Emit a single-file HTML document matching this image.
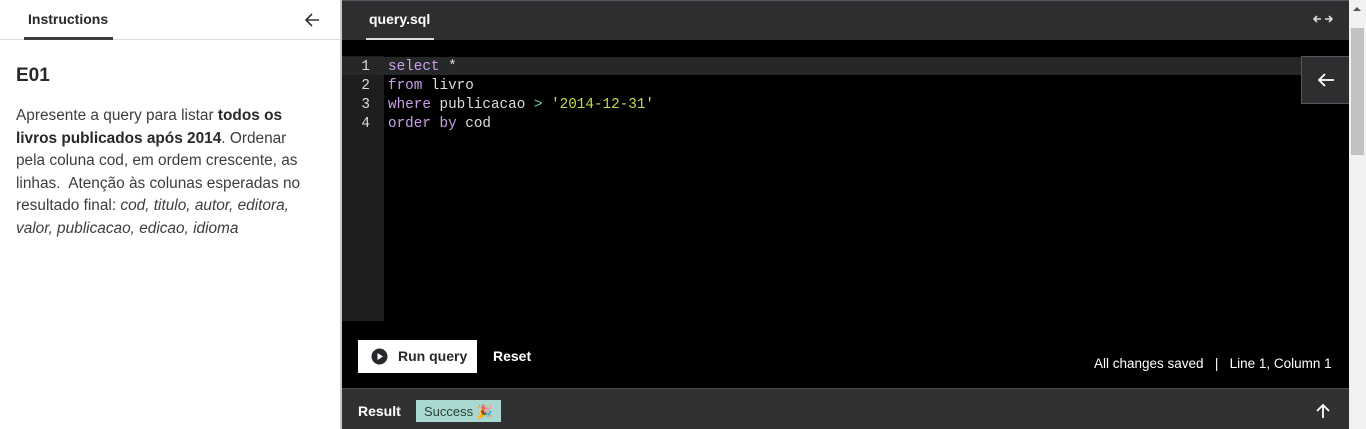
<!DOCTYPE html>
<html><head><style>
*{margin:0;padding:0;box-sizing:border-box}
body{width:1366px;height:429px;overflow:hidden;position:relative;font-family:"Liberation Sans",sans-serif;background:#fff}
.abs{position:absolute}
.mono{font-family:"Liberation Mono",monospace;font-size:14.3px}
</style></head><body>
<div class="abs" style="left:0;top:0;width:340px;height:429px;background:#fff"></div>
<div class="abs" style="left:0;top:39px;width:340px;height:1px;background:#dcdde0"></div>
<div class="abs" style="left:28px;top:11px;font-size:14px;font-weight:bold;color:#26282b">Instructions</div>
<div class="abs" style="left:24px;top:37px;width:89px;height:3px;background:#3b3d40"></div>
<svg class="abs" style="left:304px;top:12px" width="16" height="16" viewBox="0 0 16 16"><path d="M15 8H2M8 2L2 8l6 6" stroke="#333" stroke-width="1.6" fill="none"/></svg>
<div class="abs" style="left:16px;top:65px;font-size:19px;font-weight:bold;color:#26282b">E01</div>
<div class="abs" style="left:16px;top:105px;width:292px;font-size:15.4px;line-height:22.5px;color:#3b3d40">Apresente a query para listar <b style="color:#26282b">todos os livros publicados após 2014</b>. Ordenar pela coluna cod, em ordem crescente, as linhas.&nbsp; Atenção às colunas esperadas no resultado final: <i>cod, titulo, autor, editora, valor, publicacao, edicao, idioma</i></div>
<div class="abs" style="left:340px;top:0;width:2px;height:429px;background:#c8c9cc"></div>
<div class="abs" style="left:342px;top:0;width:1007px;height:40px;background:#2d2e30;border-top:1px solid #55575a"></div>
<div class="abs" style="left:369px;top:11px;font-size:14px;font-weight:bold;color:#fff">query.sql</div>
<div class="abs" style="left:366px;top:38px;width:68px;height:2px;background:#dcdcdc"></div>
<svg class="abs" style="left:1313px;top:13px" width="20" height="12" viewBox="0 0 20 12"><path d="M1 6h7M4 3L1 6l3 3M12 6h7M16 3l3 3-3 3" stroke="#ddd" stroke-width="1.6" fill="none"/></svg>
<div class="abs" style="left:342px;top:40px;width:1007px;height:348px;background:#000"></div>
<div class="abs" style="left:342px;top:56px;width:42px;height:265px;background:#1d1e20"></div>
<div class="abs" style="left:342px;top:57px;width:1007px;height:18px;background:#262729"></div>
<div class="abs mono" style="left:352px;top:58px;line-height:19px;color:#ddd;text-align:right;width:18px">1<br>2<br>3<br>4</div>
<div class="abs mono" style="left:388px;top:58px;line-height:19px;color:#ddd;white-space:pre"><span style="color:#c9a0e8">select</span> *
<span style="color:#c9a0e8">from</span> livro
<span style="color:#c9a0e8">where</span> publicacao <span style="color:#6cc8c0">&gt;</span> <span style="color:#c9d94a">'2014-12-31'</span>
<span style="color:#c9a0e8">order</span> <span style="color:#c9a0e8">by</span> cod</div>
<div class="abs" style="left:1301px;top:56px;width:48px;height:48px;background:#2d2e30;border:1px solid #55575a;border-right:none"></div>
<svg class="abs" style="left:1317px;top:72px" width="18" height="16" viewBox="0 0 18 16"><path d="M17 8H2M8 2L2 8l6 6" stroke="#fff" stroke-width="1.8" fill="none"/></svg>
<div class="abs" style="left:358px;top:340px;width:119px;height:33px;background:#fff"></div>
<svg class="abs" style="left:371px;top:348px" width="17" height="17" viewBox="0 0 17 17"><circle cx="8.5" cy="8.5" r="8" fill="#26282b"/><path d="M6.5 5v7l5.5-3.5z" fill="#fff"/></svg>
<div class="abs" style="left:398px;top:348px;font-size:14px;font-weight:bold;color:#26282b">Run query</div>
<div class="abs" style="left:493px;top:348px;font-size:14px;font-weight:bold;color:#fff">Reset</div>
<div class="abs" style="left:1094px;top:356px;font-size:13.5px;color:#fff;white-space:pre">All changes saved   |   Line 1, Column 1</div>
<div class="abs" style="left:342px;top:388px;width:1007px;height:41px;background:#303133;border-top:1px solid #4a4b4e"></div>
<div class="abs" style="left:358px;top:403px;font-size:14px;font-weight:bold;color:#fff">Result</div>
<div class="abs" style="left:416px;top:400px;width:85px;height:22px;background:#a8d8cf;font-size:13px;color:#2d3e3a;padding:4px 0 0 8px">Success 🎉</div>
<svg class="abs" style="left:1315px;top:403px" width="16" height="16" viewBox="0 0 16 16"><path d="M8 15V2M2 8l6-6 6 6" stroke="#fff" stroke-width="1.8" fill="none"/></svg>
<div class="abs" style="left:1349px;top:0;width:17px;height:429px;background:#f1f1f1"></div>
<div class="abs" style="left:1351px;top:28px;width:13px;height:127px;background:#c1c1c1"></div>
<div class="abs" style="left:1353px;top:7px;width:0;height:0;border-left:4px solid transparent;border-right:4px solid transparent;border-bottom:4px solid #555"></div>
</body></html>
